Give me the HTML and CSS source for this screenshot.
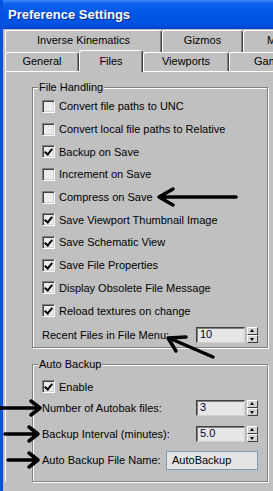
FILE: index.html
```html
<html>
<head>
    <title>Preference Settings</title>
<link rel="stylesheet" href="styles.css">
</head>
<body>
<div class="window">
    <div class="titlebar">Preference Settings</div>

    <div class="tabs">
        <div class="tabrow back">
            <span class="tab t-ik">Inverse Kinematics</span>
            <span class="tab t-gizmos">Gizmos</span>
            <span class="tab t-rest">M</span>
        </div>
        <div class="tabrow front">
            <span class="tab t-general">General</span>
            <span class="tab t-files selected">Files</span>
            <span class="tab t-viewports">Viewports</span>
            <span class="tab t-rest">Gam</span>
        </div>
    </div>

    <div class="panel">
        <div class="group file-handling">
            <span class="group-title">File Handling</span>
            <div class="checks">
                <div class="check"><span class="box"></span>Convert file paths to UNC</div>
                <div class="check"><span class="box"></span>Convert local file paths to Relative</div>
                <div class="check on"><span class="box"></span>Backup on Save</div>
                <div class="check"><span class="box"></span>Increment on Save</div>
                <div class="check"><span class="box"></span>Compress on Save</div>
                <div class="check on"><span class="box"></span>Save Viewport Thumbnail Image</div>
                <div class="check on"><span class="box"></span>Save Schematic View</div>
                <div class="check on"><span class="box"></span>Save File Properties</div>
                <div class="check on"><span class="box"></span>Display Obsolete File Message</div>
                <div class="check on"><span class="box"></span>Reload textures on change</div>
            </div>
            <div class="field">
                <span>Recent Files in File Menu:</span>
                <span class="spinner"><span class="spin-value">10</span><span class="spin-btns"><span class="up"></span><span class="down"></span></span></span>
            </div>
        </div>

        <div class="group auto-backup">
            <span class="group-title">Auto Backup</span>
            <div class="check on enable"><span class="box"></span>Enable</div>
            <div class="field">
                <span>Number of Autobak files:</span>
                <span class="spinner"><span class="spin-value">3</span><span class="spin-btns"><span class="up"></span><span class="down"></span></span></span>
            </div>
            <div class="field">
                <span>Backup Interval (minutes):</span>
                <span class="spinner"><span class="spin-value">5.0</span><span class="spin-btns"><span class="up"></span><span class="down"></span></span></span>
            </div>
            <div class="field">
                <span>Auto Backup File Name:</span>
                <span class="textbox">AutoBackup</span>
            </div>
        </div>
    </div>
</div>

<!-- annotation arrows drawn over the dialog -->
<svg class="arrows" width="273" height="491" viewBox="0 0 273 491">
    <g stroke="#000" stroke-width="3.5" fill="none" stroke-linecap="round" stroke-linejoin="round">
        <path d="M236 197 H160 M173 189 L159 197 L173 205"/>
        <path d="M213 357 L169 338 M186 337 L168 338 L176 351"/>
        <path d="M0 408 H39 M31 401 L40 408 L31 415"/>
        <path d="M5 434 H37 M29 427 L38 434 L29 441"/>
        <path d="M8 460 H37 M29 453 L38 460 L29 467"/>
    </g>
</svg>
</body>
</html>
```

FILE: styles.css
```css
body {
    margin: 0;
    background: #c0c0c0;
    font-family: "Liberation Sans", Arial, sans-serif;
    font-size: 11px;
    color: #000;
    overflow: hidden;
}
.window {
    height: 491px;
    border-left: 3px solid #0551e0;
    box-sizing: border-box;
}
.titlebar {
    height: 29px;
    line-height: 29px;
    padding-left: 5px;
    color: #fff;
    font-weight: bold;
    font-size: 13px;
    background: linear-gradient(to bottom, #3d8cf8 0%, #0d62ec 12%, #0056e6 45%, #0053e2 85%, #0041cf 100%);
    text-shadow: 1px 1px 0 #0a2a8a;
}
.tabs {
    padding: 1px 0 0 2px;
}
.tabrow {
    display: flex;
    white-space: nowrap;
    overflow: hidden;
}
.tab {
    flex: none;
    box-sizing: border-box;
    text-align: center;
    line-height: 13px;
    border: 1px solid;
    border-color: #fff #404040 transparent #fff;
    border-bottom: none;
    box-shadow: inset -1px 0 0 #808080;
    border-radius: 3px 3px 0 0;
    background: #c0c0c0;
}
.back .tab {
    height: 22px;
    padding-top: 3px;
}
.front {
    height: 19px;
    overflow: visible;
}
.front .tab {
    height: 19px;
    padding-top: 2px;
}
.t-ik { width: 157px; }
.t-gizmos { width: 81px; }
.t-general { width: 74px; }
.t-files { width: 64px; }
.t-viewports { width: 86px; }
.t-rest { flex: 1; text-align: left; padding-left: 23px; border-right: none; }
.front .t-rest { padding-left: 24px; }
.tab.selected {
    position: relative;
    z-index: 1;
    height: 22px;
    margin-top: -2px;
    padding-top: 4px;
}
.panel {
    margin-left: 2px;
    border-top: 1px solid #fff;
    border-left: 1px solid #fff;
    padding: 15px 0 0 26px;
}
.group {
    box-sizing: border-box;
    width: 236px;
    border: 1px solid #808080;
    box-shadow: inset 1px 1px 0 #fff, 1px 1px 0 #fff;
    padding: 0 9px 0 9px;
}
.file-handling {
    height: 261px;
}
.auto-backup {
    height: 118px;
    margin-top: 16px;
}
.group-title {
    display: inline-block;
    vertical-align: top;
    line-height: 13px;
    margin: -7px 0 0 -4px;
    padding: 0 1px;
    background: #c0c0c0;
}
.checks {
    margin-top: 1px;
}
.check {
    display: flex;
    align-items: center;
    height: 22.7px;
    white-space: nowrap;
}
.check.enable {
    height: 17px;
    margin-top: 7px;
}
.box {
    flex: none;
    box-sizing: border-box;
    width: 13px;
    height: 13px;
    margin-right: 4px;
    border: 1px solid;
    border-color: #808080 #fff #fff #808080;
    box-shadow: inset 1px 1px 0 #404040, inset -1px -1px 0 #d4d0c8;
    background: #ebebeb;
    position: relative;
}
.check.on .box::after {
    content: "";
    position: absolute;
    left: 2px;
    top: 0px;
    width: 3px;
    height: 6px;
    border: solid #000;
    border-width: 0 2px 2px 0;
    transform: translate(1px, 1px) rotate(40deg);
}
.field {
    display: flex;
    align-items: center;
    justify-content: space-between;
    height: 26px;
    white-space: nowrap;
}
.spinner {
    display: flex;
    align-items: center;
}
.spin-value {
    box-sizing: border-box;
    width: 49px;
    height: 16px;
    line-height: 13px;
    padding-left: 3px;
    border: 1px solid;
    border-color: #404040 #d4d0c8 #d4d0c8 #404040;
    box-shadow: inset 1px 1px 0 #808080;
    background: #e6e6e6;
    color: #00003a;
}
.spin-btns {
    display: flex;
    flex-direction: column;
    width: 11px;
    height: 16px;
    margin-left: 2px;
}
.spin-btns span {
    flex: 1;
    box-sizing: border-box;
    border: 1px solid;
    border-color: #fff #404040 #404040 #fff;
    background: #d4d4d4;
    position: relative;
}
.spin-btns span::after {
    content: "";
    position: absolute;
    left: 2px;
    border-left: 2.5px solid transparent;
    border-right: 2.5px solid transparent;
}
.spin-btns .up::after {
    top: 1px;
    border-bottom: 3px solid #000;
}
.spin-btns .down::after {
    top: 2px;
    border-top: 3px solid #000;
}
.textbox {
    box-sizing: border-box;
    width: 92px;
    height: 19px;
    line-height: 17px;
    padding-left: 5px;
    border: 1px solid #7f9db9;
    background: #e4e4e4;
}
.arrows {
    position: absolute;
    top: 0;
    left: 0;
    pointer-events: none;
}
```
